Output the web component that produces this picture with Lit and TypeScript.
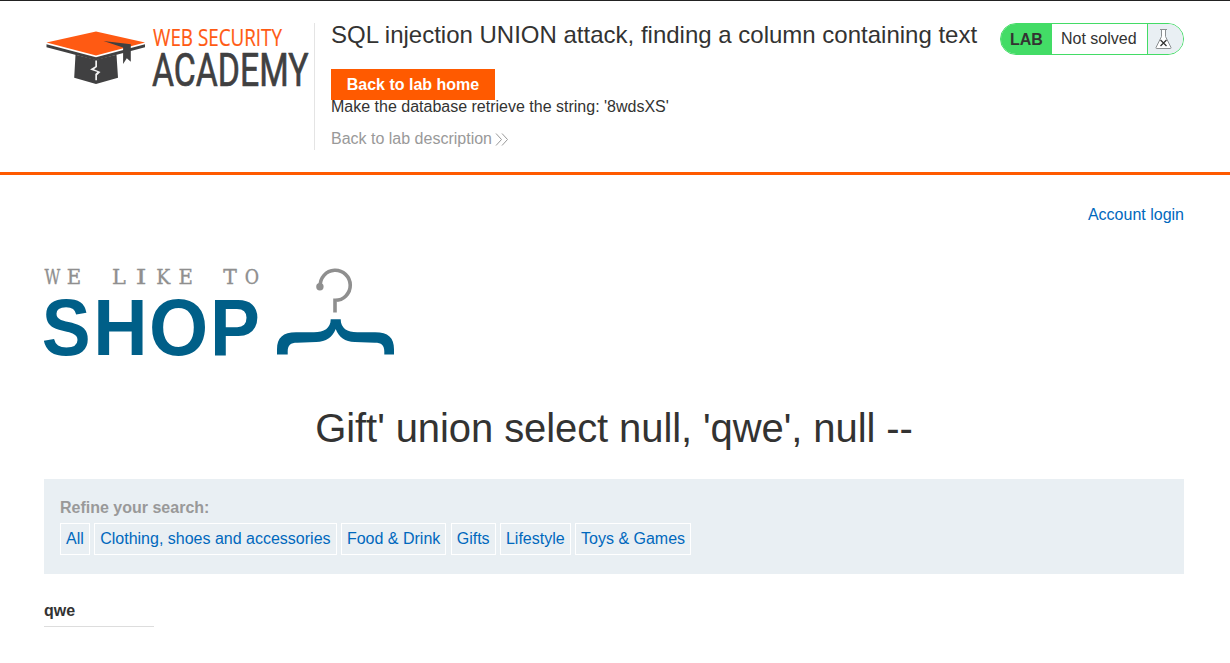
import { LitElement, html, svg, css } from "lit";
import { customElement } from "lit/decorators.js";

@customElement("academy-logo")
class AcademyLogo extends LitElement {
  static styles = css`
    :host { display: block; width: 270px; height: 70px; }
    svg { display: block; overflow: visible; }
    .web { font-family: "Open Sans", sans-serif; font-size: 23px; fill: #ff5a13; stroke: #ff5a13; stroke-width: .2px; }
    .academy { font-family: Roboto, sans-serif; font-size: 45.5px; fill: #404041; stroke: #404041; stroke-width: .7px; stroke-linejoin: round; }
  `;
  render() {
    return html`<svg width="270" height="70" viewBox="44 23 270 70">
      <path fill="#ff5a13" d="M46.5 42.5 96 31.5l49 11L96 55.5z" />
      <path fill="#404041" d="M46.5 44.3 96 57.3l49-13v2.9L96 60.2 46.5 47.2z" />
      <path fill="#404041" d="m75.5 54.8 20.5 5 20.500-5L118 77.8 96 84 74.2 77.8z" />
      <path fill="#404041" d="m103.5 41 27.3 3.300v17.500l-4-3.600-3.700 5.800V47.500z" />
      <path fill="#f2f2f2" d="M95.300 60.500h1.700v6.500l-3 2.300 6.500 2.700-3.500 3.200v5h-1.700v-6.200l2-2-7.300-2.500 5.300-3.300z" />
      <text class="web" x="153" y="46" textLength="129" lengthAdjust="spacingAndGlyphs">WEB SECURITY</text>
      <text class="academy" x="152" y="86.3" textLength="156.500" lengthAdjust="spacingAndGlyphs">ACADEMY</text>
    </svg>`;
  }
}

@customElement("shop-logo")
class ShopLogo extends LitElement {
  static styles = css`
    :host { display: block; width: 352px; height: 92px; }
    svg { display: block; overflow: visible; }
    .tag { font: 20.800px "DejaVu Serif", serif; fill: #8f8f8f; stroke: #8f8f8f; stroke-width: .35px; text-anchor: middle; }
    .shop { font: bold 80.500px "Liberation Sans", Arial, sans-serif; fill: #005f88; }
  `;
  render() {
    const tagline: [string, number, number][] = [
      ["W", 52.3, 0.74], ["E", 74, 0.95], ["L", 119, 1], ["I", 141, 1.3],
      ["K", 163.3, 0.9], ["E", 185.7, 0.95], ["T", 230, 0.98], ["O", 252, 0.84],
    ];
    const shop: [string, number, number][] = [
      ["S", 41.8, 0.91], ["H", 93.2, 0.935], ["O", 148.9, 0.945], ["P", 210, 0.93],
    ];
    return html`<svg width="352" height="92" viewBox="44 265 352 92">
      ${tagline.map(([c, x, s]) => svg`<text class="tag" transform="translate(${x} 284) scale(${s} 1)">${c}</text>`)}
      ${shop.map(([c, x, s]) => svg`<text class="shop" transform="translate(${x} 354.7) scale(${s} 1)">${c}</text>`)}
      <path fill="none" stroke="#8f8f8f" stroke-width="3.600" d="M320.300 286.500A15 15 0 1 1 335 300.300V312.500" />
      <circle cx="319.900" cy="286.800" r="3.700" fill="#8f8f8f" />
      <path fill="#005f88" d="M330.7 319.2h10c0 9 6.500 13 16.500 13h18c13 0 18.800 5.500 18.800 17v5.300h-9.700v-3.300c0-6-2.800-8.500-9.500-8.500l-20-.7c-10-.4-15.800-4.500-19.100-13-3.300 8.500-9.500 12.600-19.500 13l-19 .7c-6.700 0-9.500 2.500-9.500 8.500v3.300H277v-5.300c0-11.500 6-17 19-17h18c10 0 16.700-4 16.700-13z" />
    </svg>`;
  }
}

@customElement("lab-status")
class LabStatus extends LitElement {
  static styles = css`
    :host {
      display: flex; box-sizing: border-box; width: 184px; height: 32px;
      border: 1px solid #43dc66; border-radius: 16px; overflow: hidden;
      font-size: 16px; line-height: 30px; background: #fff;
    }
    .lab { width: 51px; box-sizing: border-box; padding-left: 9px; background: #43dc66; font-weight: bold; line-height: 31px; }
    .state { width: 95px; box-sizing: border-box; padding-left: 9px; white-space: nowrap; }
    .flask { flex: 1; border-left: 1px solid #43dc66; background: #e9eff3; }
    svg { display: block; margin: 4px 0 0 7px; }
  `;
  render() {
    return html`<span class="lab">LAB</span><span class="state">Not solved</span>
      <span class="flask"><svg width="17" height="22" viewBox="0 0 17 22">
        <path d="M5 1.500h7M6.500 1.500v7L1 19.500q-.3 1 .8 1h13.400q1.100 0 .8-1L10.500 8.500v-7" fill="#fff" stroke="#8b8f91" />
        <path d="m5.500 12 6 6m0-6-6 6" stroke="#333332" stroke-width="1.300" />
      </svg></span>`;
  }
}

@customElement("app-root")
class AppRoot extends LitElement {
  static styles = css`
    :host {
      display: block; box-sizing: border-box; height: 663px; overflow: hidden;
      border-top: 1px solid #222; background: #fff; color: #333332;
      font: 16px/20px "Liberation Sans", Arial, sans-serif;
    }
    a { color: #0068bd; text-decoration: none; }
    header {
      display: flex; align-items: flex-start; box-sizing: border-box; height: 174px;
      padding: 22px 46px 0 44px; border-bottom: 3px solid #ff5a00;
    }
    .info { flex: 1; height: 127px; box-sizing: border-box; border-left: 1px solid #e4e4e4; padding-left: 16px; }
    h2 { margin: 0; font-size: 24px; line-height: 24px; font-weight: normal; white-space: nowrap; }
    .home {
      display: block; width: 164px; height: 31px; margin-top: 22px;
      background: #ff5a00; color: #fff; font-weight: bold; line-height: 31px; text-align: center;
    }
    p { margin: -3px 0 12px; }
    .back { display: flex; align-items: center; gap: 3px; color: #999; }
    .back svg { display: block; }
    main { padding: 30px 46px 0 44px; }
    .login { display: flex; justify-content: flex-end; }
    shop-logo { margin-top: 40px; }
    h1 { margin: 46px 0 0; font-size: 40px; line-height: 50px; font-weight: normal; text-align: center; letter-spacing: -.09px; }
    .filters { box-sizing: border-box; height: 95px; margin-top: 26px; padding: 19px 16px 0; background: #e9eff3; }
    .label { color: #999; font-weight: bold; }
    .tags { display: flex; gap: 4.400px; margin-top: 5px; }
    .tags a { border: 1px solid #fff; padding: 0 5px; line-height: 30px; white-space: nowrap; }
    .result { box-sizing: border-box; width: 110px; height: 27px; margin-top: 26px; padding-top: 1px; border-bottom: 1px solid #ddd; font-weight: bold; }
  `;
  render() {
    const tags = ["All", "Clothing, shoes and accessories", "Food & Drink", "Gifts", "Lifestyle", "Toys & Games"];
    return html`
      <header>
        <academy-logo></academy-logo>
        <div class="info">
          <h2>SQL injection UNION attack, finding a column containing text</h2>
          <a class="home" href="#">Back to lab home</a>
          <p>Make the database retrieve the string: '8wdsXS'</p>
          <a class="back" href="#">Back to lab description
            <svg width="14" height="13" viewBox="0 0 14 13" fill="none" stroke="#999"><path d="m1 .5 5.500 6-5.500 6m6-12 5.500 6-5.500 6" /></svg>
          </a>
        </div>
        <lab-status></lab-status>
      </header>
      <main>
        <div class="login"><a href="#">Account login</a></div>
        <shop-logo></shop-logo>
        <h1>Gift' union select null, 'qwe', null --</h1>
        <section class="filters">
          <div class="label">Refine your search:</div>
          <div class="tags">${tags.map((t) => html`<a href="#">${t}</a>`)}</div>
        </section>
        <div class="result">qwe</div>
      </main>`;
  }
}
